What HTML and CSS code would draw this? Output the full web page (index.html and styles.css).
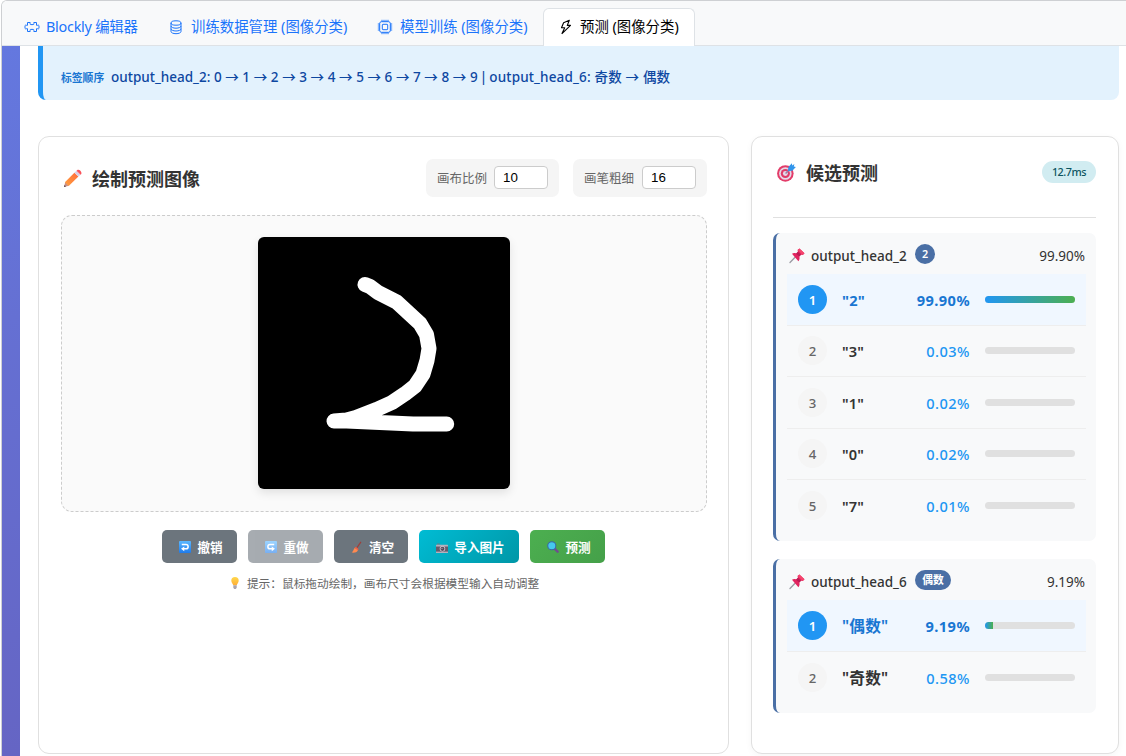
FILE: index.html
```html
<!DOCTYPE html>
<html lang="zh-CN">
<head>
<meta charset="utf-8">
<title>预测 (图像分类)</title>
<link rel="stylesheet" href="styles.css">
</head>
<body>
<svg class="defs" aria-hidden="true">
  <defs>
    <linearGradient id="bluebox" x1="0" y1="0" x2="0" y2="1"><stop offset="0" stop-color="#5bb8ff"/><stop offset="1" stop-color="#1f7bea"/></linearGradient>
    <linearGradient id="wood" x1="1" y1="0" x2="0" y2="1"><stop offset="0" stop-color="#ff6a3d"/><stop offset="1" stop-color="#ffa13d"/></linearGradient>
    <linearGradient id="bulb" x1="0" y1="0" x2="0" y2="1"><stop offset="0" stop-color="#ffd84d"/><stop offset="1" stop-color="#ffae35"/></linearGradient>
  </defs>
  <symbol id="pin" viewBox="0 0 16 16">
    <path d="M1 14.500 6.300 9" stroke="#9b9ba3" stroke-width="1.300" stroke-linecap="round"/>
    <path d="M3 5.800c1.400-.9 2.800-.8 4.200-.3l1.700-1.700-.3-1.800L10.400.4l5.100 4.800-1.700 1.700-1.800-.2-1.700 1.900c.6 1.600.3 3.200-.9 4.700z" fill="#e2245f"/>
    <path d="m7 5.700 1.900-1.900 3.100 2.900-1.700 1.900z" fill="#b81c54"/>
    <path d="m8.600 2 1.800-1.600 5.100 4.800-1.700 1.700z" fill="#f5466d"/>
  </symbol>
</svg>
<div class="frame">
  <nav class="tabs">
    <a class="tab"><svg class="tab-icon" viewBox="0 0 16 16" fill="none" stroke="currentColor" stroke-width="1"><path d="M3.500 3.500h2.700v.8c-.5.800 0 1.300.8 1.300h2c.8 0 1.300-.5.8-1.300v-.8h2.700v2.800h1c.8-.5 1.500-.1 1.500.7v2c0 .8-.7 1.200-1.500.7h-1v2.800H9.800v-.8c.5-.8 0-1.300-.8-1.300H7c-.8 0-1.300.5-.8 1.300v.8H3.500V9.700h-1C1.700 10.200 1 9.800 1 9V7c0-.8.7-1.200 1.500-.7h1z"/></svg><span class="w-blockly">Blockly 编辑器</span></a>
    <a class="tab"><svg class="tab-icon" viewBox="0 0 16 16" fill="none" stroke="currentColor" stroke-width="1"><ellipse cx="8" cy="4" rx="5" ry="2.200"/><path d="M3 4v8.500c0 1.200 2.200 2.200 5 2.200s5-1 5-2.200V4M3 7c0 1.200 2.200 2.200 5 2.200S13 8.200 13 7M3 9.800C3 11 5.200 12 8 12s5-1 5-2.200"/></svg><span class="w-data">训练数据管理 (图像分类)</span></a>
    <a class="tab"><svg class="tab-icon" viewBox="0 0 16 16" fill="none" stroke="currentColor" stroke-width="1"><rect x="2.700" y="2.700" width="10.600" height="10.600" rx="1.800"/><rect x="5.300" y="5.300" width="5.400" height="5.400" rx=".7"/><path d="M5 .8v2M7 .8v2M9 .8v2M11 .8v2M5 13.200v2M7 13.200v2M9 13.200v2M11 13.200v2M.8 5h2M.8 7h2M.8 9h2M.8 11h2M13.200 5h2M13.200 7h2M13.200 9h2M13.200 11h2"/></svg><span class="w-train">模型训练 (图像分类)</span></a>
    <a class="tab active"><svg class="tab-icon" viewBox="0 0 16 16" fill="none" stroke="currentColor" stroke-width="1.100" stroke-linejoin="round"><path d="M11.300 1.200 5.600 3.700 3.500 8.800h3.200L4 14.600 12.500 6.400H9.300z"/></svg><span class="w-predict">预测 (图像分类)</span></a>
  </nav>
  <div class="stage">
    <main class="page">
      <section class="banner"><span class="banner-label">标签顺序</span><span class="banner-text">output_head_2: 0 → 1 → 2 → 3 → 4 → 5 → 6 → 7 → 8 → 9 <span class="divider">|</span> <span class="second">output_head_6: 奇数 → 偶数</span></span></section>
      <div class="columns">
        <section class="card draw">
          <header class="draw-head">
            <h2><svg class="pencil" viewBox="0 0 20 20"><path d="m1 19 1.500-5.500 3.800 4z" fill="#c98f86"/><path d="m1 19 .6-2.200 1.600 1.600z" fill="#4d4652"/><path d="M2 14 12 4l4.200 4L6 18z" fill="url(#wood)"/><path d="m12 4 2.200-2.200 4.300 4.300L16.200 8z" fill="#d9cfe6"/><path d="m14.200 1.800.9-.8c1.700-1.400 5.300 2 4.100 4.200l-.7.900z" fill="#fa5259"/></svg>绘制预测图像</h2>
            <label class="field">画布比例<input value="10"></label>
            <label class="field">画笔粗细<input value="16"></label>
          </header>
          <div class="drawing">
            <svg class="canvas" viewBox="0 0 252 252"><path d="M107 47.500 112 49.500 120 55.500 138.700 65 162 86.500 168.500 97.500 171 111.500 169 123.500 165 137 157 149 147 156.800 134 165.500 118.500 172.500 98 180.500 88.700 183 76 184 88.700 184 155 187 188.700 187" fill="none" stroke="#fff" stroke-width="15" stroke-linecap="round" stroke-linejoin="round"/></svg>
          </div>
          <div class="buttons">
            <button class="btn gray"><svg viewBox="0 0 13 13"><rect width="13" height="13" rx="1" fill="url(#bluebox)"/><path d="M3 3.700h4.500a2.400 2.400 0 0 1 0 4.800H4.800" fill="none" stroke="#fff" stroke-width="1.600"/><path d="M5.700 5.900v5.200L2.200 8.500z" fill="#fff"/></svg>撤销</button>
            <button class="btn gray disabled"><svg viewBox="0 0 13 13"><rect width="13" height="13" rx="1" fill="url(#bluebox)"/><path d="M10 3.700H5.500a2.400 2.400 0 0 0 0 4.800h2.700" fill="none" stroke="#fff" stroke-width="1.600"/><path d="M7.300 5.900v5.200l3.500-2.600z" fill="#fff"/></svg>重做</button>
            <button class="btn gray short"><svg viewBox="0 0 13 13"><path d="M10.800 1 6.500 7.200" stroke="#9e3f3a" stroke-width="1.300"/><path d="m5 6.300 3.200 2.300-.7 1.600-3.700-2.600z" fill="#f65b42"/><path d="M3.900 7.600 7.500 10c-1.300 2.500-4 3-6.800 2.500 1.800-1.200 2.200-3.500 3.200-4.900z" fill="#ff8a50"/></svg>清空</button>
            <button class="btn cyan"><svg viewBox="0 0 13 13"><path d="M1 4V2.800h3V4" fill="#77727c"/><rect y="4" width="13" height="9" rx=".6" fill="#b6b0bd"/><path d="M0 6h13v5.500H0z" fill="#655b6b"/><circle cx="7" cy="8.500" r="3" fill="#d1cbd5"/><circle cx="7" cy="8.500" r="2.200" fill="#554b5a"/><circle cx="6.500" cy="8" r=".7" fill="#a9a1b1"/></svg>导入图片</button>
            <button class="btn green"><svg viewBox="0 0 13 13"><path d="m8.500 8.500 3 3" stroke="#704d8f" stroke-width="2.600" stroke-linecap="round"/><circle cx="5.200" cy="5.200" r="4.400" fill="#45c8ed" stroke="#3866a5" stroke-width="1.100"/></svg>预测</button>
          </div>
          <p class="hint"><svg viewBox="0 0 12 12"><path d="M6 0a3.700 3.700 0 0 0-3.700 3.700c0 2 1.700 2.900 1.900 4.600h3.600c.2-1.700 1.900-2.600 1.900-4.600A3.700 3.700 0 0 0 6 0z" fill="url(#bulb)"/><path d="M4.300 8.300h3.400v2.400L6.800 12H5.200l-.9-1.300z" fill="#aaa4ae"/></svg><span>提示：鼠标拖动绘制，画布尺寸会根据模型输入自动调整</span></p>
        </section>
        <section class="card result">
          <header class="result-head">
            <h2><svg class="target" viewBox="0 0 20 20"><circle cx="8.800" cy="11" r="8.700" fill="#e33c69"/><circle cx="8.800" cy="11" r="6.600" fill="#e5d9e8"/><circle cx="8.800" cy="11" r="4.800" fill="#df3b68"/><circle cx="8.800" cy="11" r="2.600" fill="#e5d9e8"/><path d="m9 11 5-5" stroke="#9b7ca6" stroke-width="1.500"/><path d="M11.500 8.500 12 4.300 15.600.3l.5 2.300L18.300 1l-.6 2.700 2.200.5-3.800 4z" fill="#3195eb"/></svg>候选预测</h2>
            <span class="time">12.7ms</span>
          </header>
          <div class="group">
            <div class="group-head"><svg class="pin"><use href="#pin"/></svg><span class="name">output_head_2</span><span class="badge">2</span><span class="total">99.90%</span></div>
            <div class="row top"><i class="rank">1</i><b class="label">"2"</b><span class="pct">99.90%</span><span class="bar"><span style="width:99.9%"></span></span></div>
            <div class="row"><i class="rank">2</i><b class="label">"3"</b><span class="pct">0.03%</span><span class="bar"></span></div>
            <div class="row"><i class="rank">3</i><b class="label">"1"</b><span class="pct">0.02%</span><span class="bar"></span></div>
            <div class="row"><i class="rank">4</i><b class="label">"0"</b><span class="pct">0.02%</span><span class="bar"></span></div>
            <div class="row"><i class="rank">5</i><b class="label">"7"</b><span class="pct">0.01%</span><span class="bar"></span></div>
          </div>
          <div class="group">
            <div class="group-head"><svg class="pin"><use href="#pin"/></svg><span class="name">output_head_6</span><span class="badge wide">偶数</span><span class="total">9.19%</span></div>
            <div class="row top"><i class="rank">1</i><b class="label han">"偶数"</b><span class="pct">9.19%</span><span class="bar"><span style="width:9.19%"></span></span></div>
            <div class="row"><i class="rank">2</i><b class="label han">"奇数"</b><span class="pct">0.58%</span><span class="bar"></span></div>
          </div>
        </section>
      </div>
    </main>
  </div>
</div>
</body>
</html>
```
FILE: styles.css
```css
* { box-sizing: border-box; }
body {
  margin: 0;
  height: 756px;
  overflow: hidden;
  background: #fff;
  color: #333;
  font-family: "Noto Sans", "Noto Sans CJK SC", sans-serif;
}
svg { flex: none; display: block; }
.defs { position: absolute; width: 0; height: 0; }
.frame {
  height: 760px;
  margin-left: 1px;
  border: 1px solid #ced0d3;
  border-right: 0;
  border-top-left-radius: 6px;
  overflow: hidden;
}
.tabs {
  display: flex;
  height: 45px;
  padding: 7px 0 0 6px;
  background: #f8f9fa;
  border-bottom: 1px solid #dee2e6;
}
.tab {
  display: flex;
  align-items: center;
  height: 38px;
  padding: 0 15px 2px;
  border: 1px solid transparent;
  border-bottom: 0;
  border-radius: 6px 6px 0 0;
  color: #1b74fb;
  font-size: 14.400px;
  line-height: 20px;
  white-space: nowrap;
}
.tab.active { padding-left: 14px; color: #000; background: #fff; border-color: #dee2e6; }
.tab-icon { width: 16px; height: 16px; margin-right: 6px; }
.tab span { display: block; }
.w-blockly { width: 90px; letter-spacing: -.25px; }
.w-data { width: 155px; padding-left: 1px; }
.w-train { width: 128px; padding-left: 1px; }
.w-predict { width: 99px; }
.stage {
  height: 712px;
  padding-left: 18px;
  background: linear-gradient(170deg, #6478df 0%, #6570d3 30%, #6560bd 100%);
}
.page { height: 712px; padding: 0 7px 0 18px; background: #fff; }
.banner {
  display: flex;
  align-items: center;
  height: 54px;
  padding: 6px 0 0 18px;
  border-left: 5px solid #2196f3;
  border-radius: 0 0 8px 8px;
  background: #e3f2fd;
  white-space: nowrap;
}
.banner-label { width: 50px; padding-top: 1px; font-size: 10.800px; font-weight: 600; color: #1976d2; }
.banner-text { font-size: 13.500px; font-weight: 500; color: #0d47a1; word-spacing: .1px; }
.divider { margin: 0 -1.500px; }
.second { letter-spacing: .15px; }
.columns { display: grid; grid-template-columns: 691px 368px; gap: 22px; margin-top: 36px; }
.card {
  height: 618px;
  border: 1px solid #e0e0e0;
  border-radius: 11px;
  background: #fff;
  box-shadow: 0 2px 7px rgba(0, 0, 0, .04);
}
.draw { padding: 22px 21px 0 22px; box-shadow: none; }
.draw-head { display: flex; height: 38px; gap: 14px; align-items: center; }
h2 { display: flex; align-items: center; flex: 1; margin: 0; font-size: 18px; line-height: 26px; font-weight: 600; color: #333; }
.draw-head h2 { padding-top: 2px; }
.pencil { width: 19px; height: 19px; margin: -1px 10px 0 2px; }
.field {
  display: flex;
  align-items: center;
  width: 133px;
  height: 38px;
  padding: 0 11px 1px;
  gap: 7px;
  border-radius: 7px;
  background: #f5f5f5;
  color: #666;
  font-size: 12.500px;
  white-space: nowrap;
}
.field + .field { width: 134px; gap: 8px; }
.field input {
  width: 54px;
  height: 23px;
  min-width: 0;
  padding: 0 8px;
  border: 1px solid #ccc;
  border-radius: 4px;
  background: #fff;
  color: #000;
  font: 13.333px "Liberation Sans", Arial, sans-serif;
}
.drawing {
  display: grid;
  justify-content: center;
  height: 297px;
  margin-top: 18px;
  padding-top: 21px;
  border: 1px dashed #ccc;
  border-radius: 11px;
  background: #fafafa;
}
.canvas { width: 252px; height: 252px; border-radius: 6px; background: #000; box-shadow: 0 4px 10px rgba(0, 0, 0, .1); }
.buttons { display: flex; justify-content: center; gap: 11px; margin-top: 18px; padding-right: 2px; }
.btn {
  display: flex;
  align-items: center;
  justify-content: center;
  gap: 6px;
  width: 75px;
  height: 33px;
  padding: 0 0 1px 4px;
  border: 0;
  border-radius: 5px;
  color: #fff;
  font: 600 12.600px "Noto Sans", "Noto Sans CJK SC", sans-serif;
}
.btn svg { width: 12px; height: 12px; margin-top: 2px; }
.gray { background: #6c757d; }
.short { width: 74px; }
.disabled { opacity: .6; }
.cyan { width: 100px; background: linear-gradient(135deg, #00bcd4, #0097a7); }
.green { background: linear-gradient(135deg, #4caf50, #45a049); }
.hint { display: flex; justify-content: center; align-items: center; gap: 6px; height: 20px; margin: 9px 0 0; color: #666; font-size: 11.700px; }
.hint svg { width: 12px; height: 12px; margin-top: 2px; }
.result { padding: 0 22px 0 21px; }
.result-head { display: flex; align-items: flex-start; height: 81px; padding-top: 23px; border-bottom: 1px solid #e0e0e0; }
.target { width: 19px; height: 19px; margin: -2px 10px 0 4px; }
.time { width: 54px; height: 22px; margin-top: 1px; border-radius: 11px; background: #d1ecf1; color: #0c5460; font-size: 10.800px; letter-spacing: -.45px; font-weight: 500; line-height: 22px; text-align: center; }
.group { margin-top: 15px; height: 308px; padding: 0 10px 0 11px; border-left: 3px solid #4a6fa5; border-radius: 7px; background: #f8f9fa; }
.group + .group { height: 154px; margin-top: 18px; }
.group-head { display: flex; align-items: center; height: 41px; padding: 4px 1px 0 2px; font-size: 13.500px; white-space: nowrap; }
.pin { width: 16px; height: 16px; margin-right: 6px; }
.name { width: 104px; font-weight: 500; }
.badge { width: 20px; height: 20px; margin-top: -4px; border-radius: 10px; background: #4a6fa5; color: #fff; font-size: 10.800px; font-weight: 600; line-height: 20px; text-align: center; }
.wide { width: 36px; }
.total { margin-left: auto; }
.row { display: flex; align-items: center; height: 51.500px; padding: 0 11px; border-bottom: 1px solid #eee; }
.row:last-child { border-bottom: 0; }
.row.top { background: #f0f7ff; }
.rank { width: 29px; height: 29px; border-radius: 50%; background: #f5f5f5; color: #666; font-size: 13.200px; font-style: normal; font-weight: 500; line-height: 31px; text-align: center; }
.label { width: 69px; margin-left: 15px; padding-top: 1px; font-size: 14.600px; letter-spacing: .2px; font-weight: 600; line-height: 22px; white-space: nowrap; }
.pct { width: 59px; padding-top: 1px; font-size: 14.600px; letter-spacing: .45px; margin-right: -.5px; font-weight: 500; line-height: 22px; color: #2196f3; text-align: right; }
.bar { width: 90px; height: 7px; margin: 0 0 0 15.500px; border-radius: 4px; background: #e0e0e0; overflow: hidden; }
.bar span { display: block; height: 7px; background: linear-gradient(90deg, #2196f3, #4caf50); }
.top .rank { background: #2196f3; color: #fff; font-weight: 600; }
.top .label, .top .pct { color: #1976d2; font-weight: 700; }
.label.han, .top .label.han { font-size: 15.700px; font-weight: 600; }
```
